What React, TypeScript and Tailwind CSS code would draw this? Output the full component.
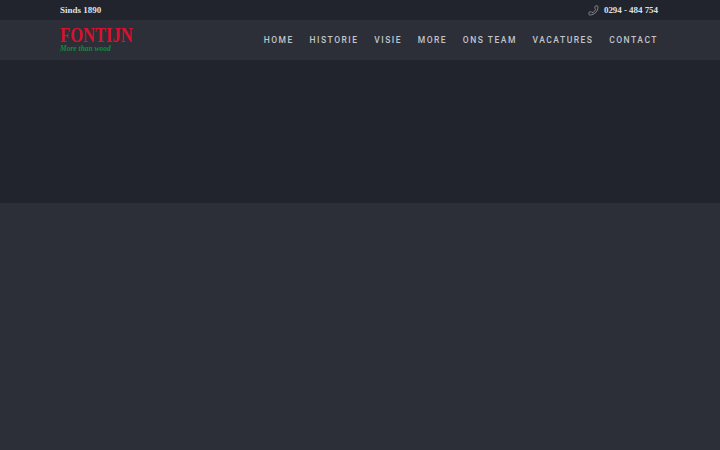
import { Phone } from 'lucide-react'

const NAV_ITEMS = ['Home', 'Historie', 'Visie', 'More', 'Ons team', 'Vacatures', 'Contact']

export default function App() {
  return (
    <div className="flex h-[450px] w-[720px] flex-col overflow-hidden bg-[#2c2f38] font-['Roboto',sans-serif]">
      {/* Top bar */}
      <div className="flex h-5 shrink-0 items-center justify-between bg-[#21242c] pt-px pl-[60px] pr-[62px] font-['Liberation_Serif',serif] text-[9px] font-bold text-[#dfe0e3]">
        <span>Sinds 1890</span>
        <div className="flex items-center gap-[5px]">
          <Phone className="h-[11px] w-[11px] -scale-x-100 text-[#d5d6da]" strokeWidth={1.1} />
          <span className="tracking-[-0.05px]">0294 - 484 754</span>
        </div>
      </div>

      {/* Nav */}
      <header className="flex h-10 shrink-0 items-center justify-between bg-[#2c2f38] pl-[60px] pr-[62px]">
        <div className="flex h-[26px] w-[74px] flex-col">
          <span className="origin-left scale-x-[0.79] font-['Liberation_Serif',serif] text-[21px] leading-[16px] font-bold whitespace-nowrap text-[#d9112c]">
            FONTIJN
          </span>
          <span className="mt-px font-['Liberation_Serif',serif] text-[7.5px] leading-[9px] font-bold whitespace-nowrap text-[#138a3c] italic">
            More than wood
          </span>
        </div>
        <nav className="flex items-center gap-[15.7px]">
          {NAV_ITEMS.map((item) => (
            <a key={item} className="text-[8.5px] leading-[13px] font-medium tracking-[1.5px] whitespace-nowrap text-[#c3c5ca] uppercase">
              {item}
            </a>
          ))}
        </nav>
      </header>

      {/* Hero */}
      <div className="h-[143px] shrink-0 bg-[#21242c]" />
    </div>
  )
}
